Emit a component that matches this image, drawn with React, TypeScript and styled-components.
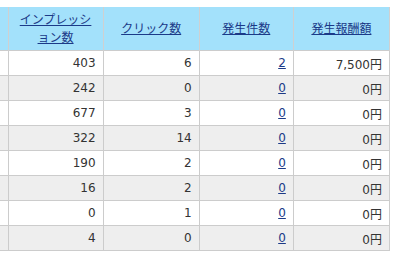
import React from "react";
import styled, { createGlobalStyle } from "styled-components";

const GlobalStyle = createGlobalStyle`
  html, body {
    margin: 0;
    padding: 0;
    background: #ffffff;
  }
  body {
    font-family: "DejaVu Sans", "Noto Sans CJK JP", sans-serif;
    font-size: 12px;
    color: #333333;
  }
`;

interface Row {
  impressions: number;
  clicks: number;
  conversions: number;
  reward: string;
}

const rows: Row[] = [
  { impressions: 403, clicks: 6, conversions: 2, reward: "7,500円" },
  { impressions: 242, clicks: 0, conversions: 0, reward: "0円" },
  { impressions: 677, clicks: 3, conversions: 0, reward: "0円" },
  { impressions: 322, clicks: 14, conversions: 0, reward: "0円" },
  { impressions: 190, clicks: 2, conversions: 0, reward: "0円" },
  { impressions: 16, clicks: 2, conversions: 0, reward: "0円" },
  { impressions: 0, clicks: 1, conversions: 0, reward: "0円" },
  { impressions: 4, clicks: 0, conversions: 0, reward: "0円" },
];

const headers = ["インプレッション数", "クリック数", "発生件数", "発生報酬額"];

export default function App() {
  return (
    <>
      <GlobalStyle />
      <Page>
        <ReportTable>
          <colgroup>
            <col style={{ width: 8 }} />
            <col style={{ width: 95 }} />
            <col style={{ width: 96 }} />
            <col style={{ width: 94 }} />
            <col style={{ width: 96 }} />
          </colgroup>
          <thead>
            <tr>
              <HeadCell $edge />
              {headers.map((h) => (
                <HeadCell key={h}>
                  <SortLink href="#">{h}</SortLink>
                </HeadCell>
              ))}
            </tr>
          </thead>
          <tbody>
            {rows.map((r, i) => (
              <BodyRow key={i} $striped={i % 2 === 1}>
                <Cell $edge />
                <Cell>{r.impressions}</Cell>
                <Cell>{r.clicks}</Cell>
                <Cell>
                  <CountLink href="#">{r.conversions}</CountLink>
                </Cell>
                <Cell>{r.reward}</Cell>
              </BodyRow>
            ))}
          </tbody>
        </ReportTable>
      </Page>
    </>
  );
}

const Page = styled.div`
  padding-top: 7px;
`;

const ReportTable = styled.table`
  border-collapse: collapse;
  table-layout: fixed;
  width: 390px;
`;

const HeadCell = styled.th<{ $edge?: boolean }>`
  background: #a3e1fb;
  height: 43px;
  padding: 0 7px;
  border-left: ${(p) => (p.$edge ? "none" : "1px solid #d0d0d0")};
  border-right: 1px solid #d0d0d0;
  font-weight: normal;
  text-align: center;
  line-height: 18px;
  vertical-align: middle;
`;

const SortLink = styled.a`
  color: #1b3a88;
  text-decoration: underline;
`;

const BodyRow = styled.tr<{ $striped: boolean }>`
  background: ${(p) => (p.$striped ? "#eeeeee" : "#ffffff")};
`;

const Cell = styled.td<{ $edge?: boolean }>`
  height: 24px;
  padding: 0 7px;
  border-top: 1px solid #cccccc;
  border-bottom: 1px solid #cccccc;
  border-left: ${(p) => (p.$edge ? "none" : "1px solid #cccccc")};
  border-right: 1px solid #cccccc;
  text-align: right;
  vertical-align: middle;
  white-space: nowrap;
`;

const CountLink = styled.a`
  color: #1b3a88;
  text-decoration: underline;
`;
